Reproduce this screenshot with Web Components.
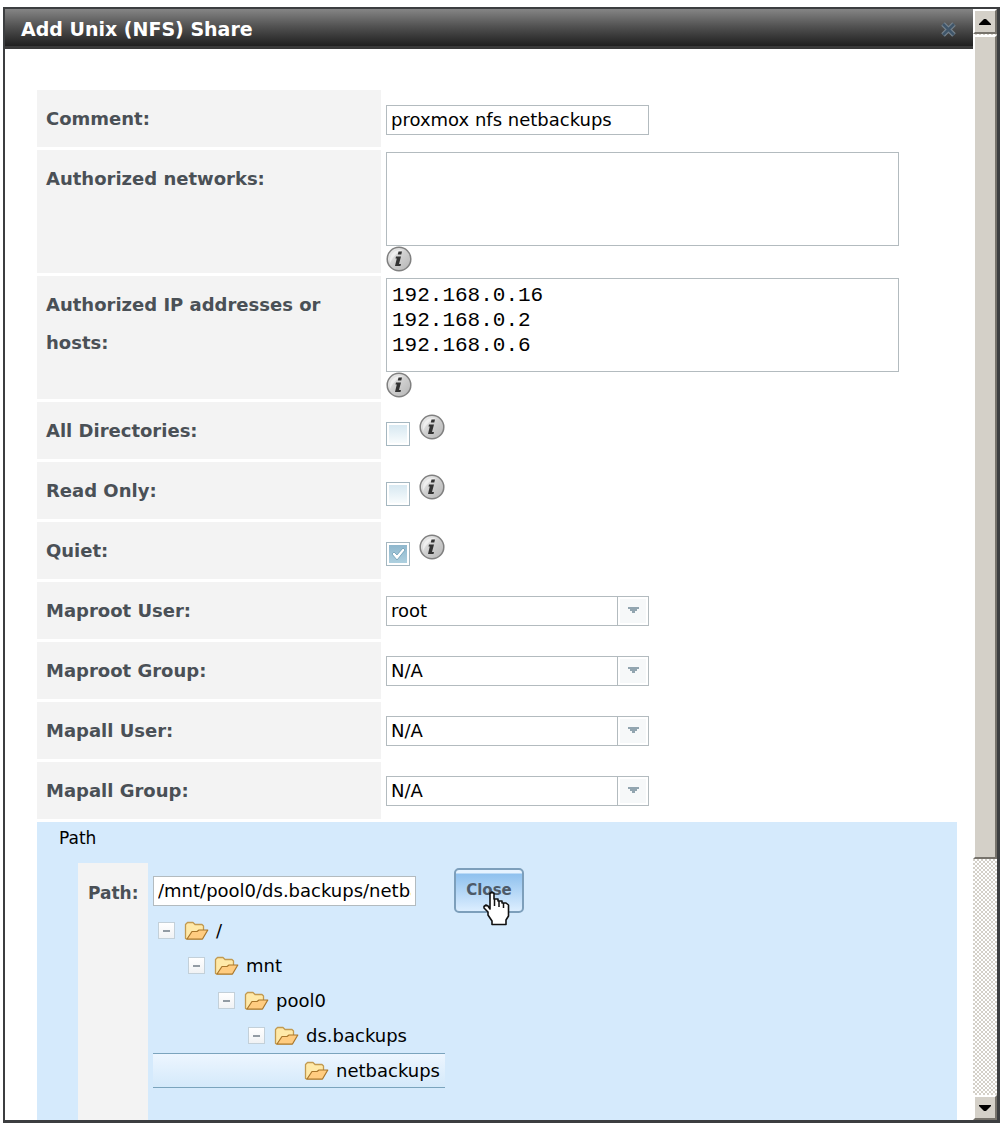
<!DOCTYPE html>
<html lang="en">
<head>
<meta charset="utf-8">
<title>Add Unix (NFS) Share</title>
<style>
html,body{height:100%}
body{margin:0;box-sizing:border-box;padding:7px 5px 4px 3px;background:#fff;overflow:hidden;font:18px/25px "DejaVu Sans",sans-serif;color:#000}
</style>
</head>
<body>
<dialog-window heading="Add Unix (NFS) Share">
  <text-row label="Comment:" value="proxmox nfs netbackups"></text-row>
  <area-row label="Authorized networks:"></area-row>
  <area-row label="Authorized IP addresses or hosts:" value="192.168.0.16
192.168.0.2
192.168.0.6"></area-row>
  <check-row label="All Directories:"></check-row>
  <check-row label="Read Only:"></check-row>
  <check-row label="Quiet:" checked></check-row>
  <combo-row label="Maproot User:" value="root"></combo-row>
  <combo-row label="Maproot Group:" value="N/A"></combo-row>
  <combo-row label="Mapall User:" value="N/A"></combo-row>
  <combo-row label="Mapall Group:" value="N/A"></combo-row>
  <path-panel value="/mnt/pool0/ds.backups/netbackups">
    <tree-item level="0">/</tree-item>
    <tree-item level="1">mnt</tree-item>
    <tree-item level="2">pool0</tree-item>
    <tree-item level="3">ds.backups</tree-item>
    <tree-item level="4" leaf selected>netbackups</tree-item>
  </path-panel>
</dialog-window>
<script>
const rowCss = `
:host{display:grid;grid-template-columns:344px minmax(0,1fr);column-gap:5px;min-height:57px}
*{box-sizing:border-box}
.label{background:#f3f3f3;color:#4a5056;font-weight:bold;font-size:18px;line-height:38px;padding:10px 40px 9px 9px}
.field{display:flex;align-items:center}
input,select,textarea{margin:0;font:inherit;color:#000;background:#fff;border:1px solid #b3bbbf;border-radius:0;outline:0}
`;
const text = (el, name) => (el.getAttribute(name) || '').replace(/&/g, '&amp;').replace(/"/g, '&quot;').replace(/</g, '&lt;');
function define(name, render) {
  customElements.define(name, class extends HTMLElement {
    constructor() { super(); this.attachShadow({mode: 'open'}); }
    connectedCallback() { if (!this.shadowRoot.firstChild) this.shadowRoot.innerHTML = render(this); }
  });
}

define('info-icon', () => `
<style>:host{display:block;width:26px;height:26px}svg{display:block}</style>
<svg width="26" height="26" viewBox="0 0 26 26" role="img" aria-label="Information">
<defs><linearGradient id="g" x1="0" y1="0" x2="1" y2="1"><stop offset="0" stop-color="#f4f4f4"/><stop offset=".5" stop-color="#cfcfcf"/><stop offset="1" stop-color="#b4b4b4"/></linearGradient></defs>
<circle cx="13" cy="13" r="11.8" fill="url(#g)" stroke="#808080" stroke-width="1.5"/>
<path d="M4 17C3 8 9 3 17 4C10 7 7 11 4 17Z" fill="#fff" opacity=".5"/>
<path d="M12.5 5.500h3.500l-.7 3h-3.500zM10 10.500h5l-2 7.500h2l-.5 2h-5.500l1.800-7.500h-1.300z" fill="#333"/>
</svg>`);

define('text-row', el => `
<style>${rowCss}input{width:263px;height:30px;padding:1px 4px}.field{padding-top:2px}</style>
<label class="label" for="c">${text(el, 'label')}</label>
<div class="field"><input id="c" type="text" value="${text(el, 'value')}"></div>`);

define('area-row', el => `
<style>${rowCss}
:host{min-height:123px}
.field{flex-direction:column;align-items:flex-start;padding-top:2px}
textarea{display:block;width:513px;max-width:100%;height:94px;resize:none;padding:4px 5px;overflow:hidden;font:21px/25px "Liberation Mono",monospace}
</style>
<label class="label" for="c">${text(el, 'label')}</label>
<div class="field"><textarea id="c">${text(el, 'value')}</textarea><info-icon></info-icon></div>`);

define('check-row', el => `
<style>${rowCss}
.field{align-items:flex-start;gap:9px;padding-top:12px}
input{appearance:none;width:24px;height:24px;margin-top:8px;padding:2px;border-color:#a5b7c0;background:linear-gradient(#d7e8f1,#f8fcfd) content-box,#fff}
input:checked{background:url("data:image/svg+xml,%3Csvg xmlns='http://www.w3.org/2000/svg' viewBox='0 0 18 18'%3E%3Cpath d='M3 9L5 7L8 10L14 3L16 5L8 15Z' fill='white' stroke='%235e93ad' stroke-width='.7'/%3E%3C/svg%3E") content-box,linear-gradient(#8fb7cd,#aed0df) content-box,#fff}
</style>
<label class="label" for="c">${text(el, 'label')}</label>
<div class="field"><input id="c" type="checkbox" ${el.hasAttribute('checked') ? 'checked' : ''}><info-icon></info-icon></div>`);

define('combo-row', el => `
<style>${rowCss}
select{appearance:none;width:263px;height:30px;padding:0 36px 0 4px;background:
url("data:image/svg+xml,%3Csvg xmlns='http://www.w3.org/2000/svg' width='31' height='28'%3E%3Cpath fill='%23b3bbbf' d='M0 0h1v28H0z'/%3E%3Cpath fill='%23f6f8f9' d='M3 2h26v24H3z'/%3E%3Cpath fill='%2392a5b0' d='M11 10h11v2h-2v2h-2v2h-3v-2h-2v-2h-2z'/%3E%3C/svg%3E") right top no-repeat,#fff}
</style>
<label class="label" for="c">${text(el, 'label')}</label>
<div class="field"><select id="c"><option>${text(el, 'value')}</option></select></div>`);

define('tree-item', el => `
<style>
:host{display:flex;align-items:center;box-sizing:border-box;height:35px;padding-left:calc(5px + var(--level) * 30px);white-space:nowrap;font-size:18px;--level:${text(el, 'level')}}
:host([selected]){border:solid #7ba4bd;border-width:1px 0;background:linear-gradient(#edf6ff,#d4e9fa)}
button{box-sizing:border-box;width:17px;height:17px;padding:0;border:1px solid #c3d0d9;background:linear-gradient(#fff,#f0f2f4);display:flex;align-items:center;justify-content:center}
button i{width:7px;height:2px;background:#929ba3}
.gap{width:17px}
.folder{margin:0 7px 0 9px;flex:none}
</style>
${el.hasAttribute('leaf') ? '<span class="gap"></span>' : '<button type="button" aria-label="Collapse"><i></i></button>'}
<svg class="folder" width="25" height="20" viewBox="0 0 25 20" aria-hidden="true">
<path d="M1.500 17.500V3.500L3.500 1.500H9L11 3.500H18L19.500 5V9.500L18 18H2.500Z" fill="#ffe9a8" stroke="#c29a50" stroke-width="1.300" stroke-linejoin="round"/>
<path d="M3 18L8 10.500H13L15 9H23.800L18.500 18Z" fill="#ffcc80" stroke="#a9762b" stroke-width="1.200" stroke-linejoin="round"/>
</svg><slot></slot>`);

define('hand-cursor', () => `
<style>:host{display:block}svg{display:block}</style>
<svg width="27" height="35" viewBox="0 0 27 35" aria-hidden="true">
<path d="M7 2.500L9 1L11 2.500V8H15V10H19V12H23L25.500 14V25L23 29V33.500H9V30L5 24V21L1 17V15.500L3 14L5 15L7 18Z" fill="#fff" stroke="#111" stroke-width="1.600" stroke-linejoin="round"/>
<path d="M11.500 8V15M16 10V16M20.500 12V17" stroke="#111" stroke-width="1.500"/>
</svg>`);

define('path-panel', el => `
<style>
*{box-sizing:border-box}
:host{display:flex;flex-direction:column;flex:1 0 0;min-height:240px;background:#d5eafc}
.title{padding:4px 22px;line-height:25px;height:41px;font-size:17px}
.body{display:flex;flex:1;padding-left:41px}
.label{background:#f3f3f3;color:#4a5056;font-weight:bold;font-size:17px;line-height:38px;padding:11px 10px;width:70px}
.field{padding:5px 0 0 5px;flex:1;min-width:0}
.line{display:flex;align-items:center;gap:38px;height:45px}
input{width:263px;height:30px;margin:0;padding:1px 4px;border:1px solid #b3bbbf;font:inherit;font-size:18px;color:#000;background:#fff}
.act{position:relative}
.act button{display:block;width:70px;height:45px;padding:0 0 2px;border:2px solid #7d9fbb;border-radius:5px;background:linear-gradient(#e6f3ff 0,#e6f3ff 3px,#8fc1ee 4px,#dceeff 100%);font:bold 15px/20px "DejaVu Sans",sans-serif;color:#4d5a68}
hand-cursor{position:absolute;left:29px;top:23px}
.tree{width:292px}
</style>
<div class="title">Path</div>
<div class="body"><label class="label" for="p">Path:</label>
<div class="field"><div class="line"><input id="p" type="text" value="${text(el, 'value')}"><div class="act"><button type="button">Close</button><hand-cursor></hand-cursor></div></div>
<div class="tree"><slot></slot></div></div></div>`);

define('scroll-rail', () => `
<style>
*{box-sizing:border-box}
:host{display:flex;flex-direction:column;width:24px;flex:none;background:repeating-conic-gradient(#d4d0c8 0 25%,#fff 0 50%) 0 0/4px 4px}
button,.thumb{background:#d4d0c8;border:2px solid;border-color:#fff #77736c #77736c #fff;width:24px;padding:0}
button{height:25px;display:flex;align-items:center;justify-content:center;flex:none}
.track{flex:1;padding-top:1px}
.thumb{height:calc(700% / 9)}
</style>
<button type="button" aria-label="Scroll up"><svg width="12" height="6"><path d="M5 0h2l5 5v1H0V5z"/></svg></button>
<div class="track"><div class="thumb"></div></div>
<button type="button" aria-label="Scroll down"><svg width="12" height="6"><path d="M0 0h12v1L7 6H5L0 1z"/></svg></button>`);

define('dialog-window', el => `
<style>
*{box-sizing:border-box}
:host{display:flex;box-sizing:border-box;height:100%;border:solid #3c3e40;border-width:2px 3px 3px 2px;overflow:hidden}
.main{flex:1;min-width:0;display:flex;flex-direction:column}
header{flex:none;height:40px;display:flex;align-items:center;justify-content:space-between;padding:0 16px;background:linear-gradient(#858585,#505050 45%,#202020 92%,#3a3a3a 93%);color:#fff}
h1{margin:0;font-size:19px;line-height:24px}
header button{display:flex;padding:0;border:0;background:none}
.content{flex:1;min-height:0;display:flex;flex-direction:column;gap:3px;padding:41px 16px 0 32px;background:#fff;overflow:hidden}
::slotted(*){flex-shrink:0}
</style>
<div class="main"><header><h1>${text(el, 'heading')}</h1><button type="button" aria-label="Close dialog"><svg width="17" height="15" viewBox="0 0 17 15"><path d="M3 2L14 13M14 2L3 13" stroke="#76838d" stroke-width="5"/><path d="M3 2L14 13M14 2L3 13" stroke="#40566a" stroke-width="2.500"/></svg></button></header>
<div class="content"><slot></slot></div></div><scroll-rail></scroll-rail>`);
</script>
</body>
</html>
